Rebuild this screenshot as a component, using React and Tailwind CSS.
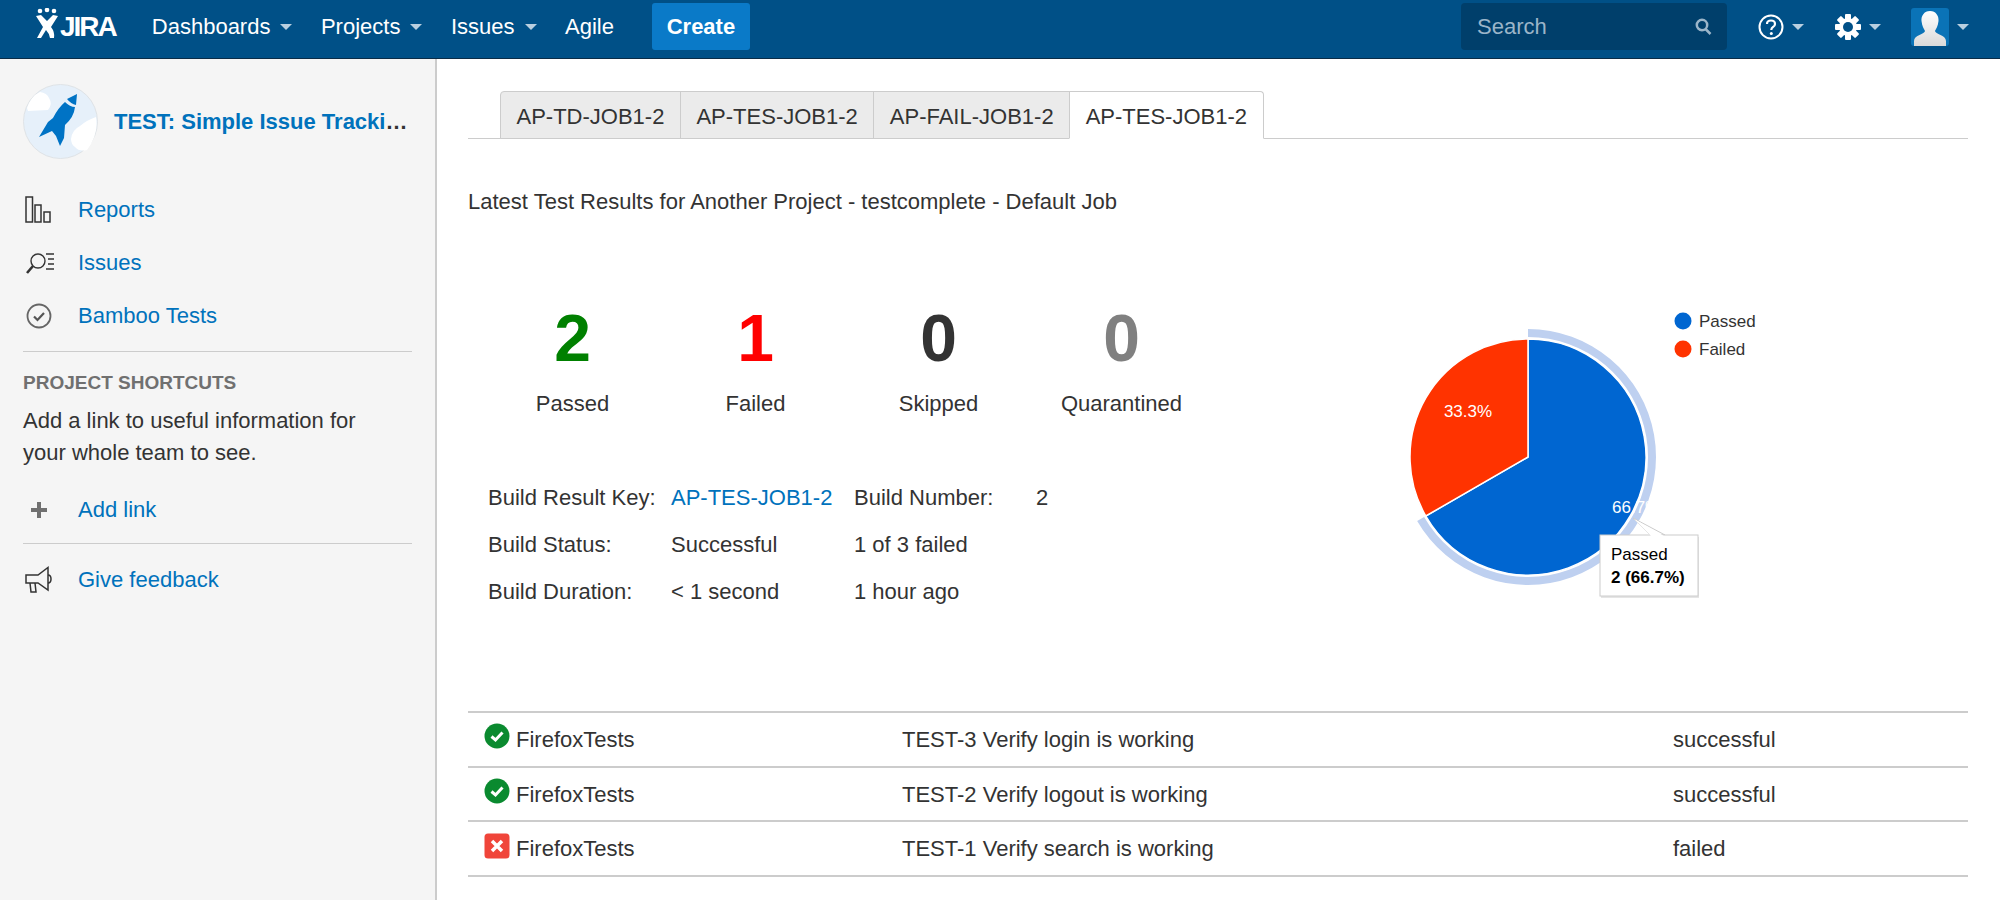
const Caret = ({ className = "" }) => (
  <span className={`inline-block w-0 h-0 border-l-[6px] border-r-[6px] border-t-[6px] border-l-transparent border-r-transparent border-t-[#b9cfe0] ${className}`} />
);

const NavItem = ({ label, caret = true }) => (
  <div className="flex items-center">
    <span className="text-[22px] text-white">{label}</span>
    {caret && <Caret className="ml-[10px]" />}
  </div>
);

const Logo = () => (
  <div className="flex items-end h-[30px] mb-[7px] shrink-0">
    <svg width="24" height="30" viewBox="0 0 24 30">
      <g fill="#fff">
        <circle cx="5" cy="3" r="2.300" />
        <circle cx="12" cy="2" r="2.300" />
        <circle cx="19" cy="3" r="2.300" />
        <path d="M1 8 L6 7 L12 13 L18 7 L23 8 L16 19 Q20 24 19 30 L15 30 Q14 25 11 22 L6 30 L2 30 L8 19 Z" />
      </g>
    </svg>
    <span className="text-[28px] leading-[28px] -mb-[3px] font-bold text-white ml-[1px] tracking-[-2px]">JIRA</span>
  </div>
);

const Avatar = () => (
  <svg width="75" height="75" viewBox="0 0 75 75" className="shrink-0">
    <circle cx="37.500" cy="37.500" r="37" fill="#e6f0fa" stroke="#dfe3e6" />
    <path d="M4 24 Q8 12 17 8 Q24 9 26 14 Q30 20 25 26 L5 27Z" fill="#fff" />
    <path d="M48 55 Q49 46 57 42 Q64 36 73 33 Q76 50 64 66 Q56 68 52 63 Q48 60 48 55Z" fill="#fff" />
    <path d="M54 10 L53 21 Q48 20 44 15 Z" fill="#0073c5" />
    <path d="M42 18 Q47 23 52 23 Q51 33 42 41 L41 54 L37 62 L33 52 L29 47 L16 53 L25 38 L30 34 Q35 24 42 18Z" fill="#0073c5" />
  </svg>
);

const ReportsIcon = () => (
  <svg width="28" height="28" viewBox="0 0 28 28" fill="none" stroke="#333" strokeWidth="1.500">
    <rect x="1" y="1" width="6.500" height="25" />
    <rect x="10" y="9" width="6" height="17" />
    <rect x="19" y="16" width="6" height="10" />
  </svg>
);
const IssuesIcon = () => (
  <svg width="30" height="22" viewBox="0 0 30 22" fill="none" stroke="#333" strokeWidth="1.400">
    <circle cx="13" cy="9" r="7" />
    <path d="M8 14 L2 21" strokeWidth="2.600" />
    <path d="M21 2 H29 M23 7 H29 M23 12 H29 M21 17 H29" />
  </svg>
);
const BambooIcon = () => (
  <svg width="26" height="26" viewBox="0 0 26 26" fill="none">
    <circle cx="13" cy="13" r="11.500" stroke="#666" strokeWidth="1.800" />
    <path d="M8 13.500 L11.500 17 L18 10" stroke="#555" strokeWidth="2.200" />
  </svg>
);
const PlusIcon = () => (
  <svg width="16" height="16" viewBox="0 0 16 16" fill="#707070">
    <rect x="6" y="0" width="4" height="16" />
    <rect x="0" y="6" width="16" height="4" />
  </svg>
);
const MegaphoneIcon = () => (
  <svg width="28" height="28" viewBox="0 0 28 28" fill="none" stroke="#333" strokeWidth="1.500">
    <path d="M1 9 H13 L23 1.500 V24 L13 17 H1Z" />
    <path d="M23 9 Q26 9 26 13 Q26 17 23 17" />
    <path d="M5 17 L6 26 H11 L10 17" />
  </svg>
);

const SideLink = ({ icon, children, inset = "pl-[2px]" }) => (
  <div className="flex items-center h-[53px]">
    <div className={`w-[55px] flex justify-start shrink-0 ${inset}`}>{icon}</div>
    <a className="text-[22px] text-[#0072bc]">{children}</a>
  </div>
);

const Sidebar = () => (
  <aside className="w-[437px] shrink-0 bg-[#f5f5f5] border-r-2 border-[#cccccc] pl-[23px] pr-[23px] pt-[25px] min-h-[841px]">
    <div className="flex items-center gap-[16px] h-[75px]">
      <Avatar />
      <div className="text-[22px] font-bold text-[#0072bc] whitespace-nowrap">TEST: Simple Issue Tracki<span className="text-[#333]">…</span></div>
    </div>
    <div className="mt-[24px]">
      <SideLink icon={<ReportsIcon />}>Reports</SideLink>
      <SideLink icon={<IssuesIcon />}>Issues</SideLink>
      <SideLink icon={<BambooIcon />} inset="pl-[3px]">Bamboo Tests</SideLink>
    </div>
    <div className="border-t-[1.500px] border-[#cccccc] mt-[9px] pt-[19px]">
      <div className="text-[19px] font-bold text-[#707070] leading-[24px]">PROJECT SHORTCUTS</div>
      <p className="text-[22px] text-[#333] leading-[32px] mt-[10px]">Add a link to useful information for<br />your whole team to see.</p>
      <div className="mt-[14px]"><SideLink icon={<PlusIcon />} inset="pl-[8px]">Add link</SideLink></div>
    </div>
    <div className="border-t-[1.500px] border-[#cccccc] mt-[7px] pt-[9px]">
      <SideLink icon={<MegaphoneIcon />}>Give feedback</SideLink>
    </div>
  </aside>
);

const Tab = ({ label, active, first }) => (
  <div className={`h-[48px] px-[15.500px] pt-[2px] flex items-center text-[22px] text-[#333] border border-[#cccccc] -mr-[1px] ${first ? "rounded-tl-[4px]" : ""} ${active ? "bg-white border-b-white rounded-tr-[4px]" : "bg-[#ebebeb]"}`}>
    {label}
  </div>
);

const Stat = ({ n, label, color }) => (
  <div className="w-[183px] flex flex-col items-center">
    <div className={`text-[66px] font-bold leading-[72px] -mt-[1px] ${color}`}>{n}</div>
    <div className="text-[22px] text-[#333] leading-[28px] mt-[16px]">{label}</div>
  </div>
);

const Details = () => {
  const rows = [
    ["Build Result Key:", <a className="text-[#0072bc]">AP-TES-JOB1-2</a>, "Build Number:", "2"],
    ["Build Status:", "Successful", "1 of 3 failed", ""],
    ["Build Duration:", "< 1 second", "1 hour ago", ""],
  ];
  return (
    <div className="ml-[20px] mt-[56px]">
      {rows.map((r, i) => (
        <div key={i} className="flex h-[47px] items-center text-[22px] text-[#333]">
          <div className="w-[183px]">{r[0]}</div>
          <div className="w-[183px]">{r[1]}</div>
          <div className="w-[182px]">{r[2]}</div>
          <div>{r[3]}</div>
        </div>
      ))}
    </div>
  );
};

const Pie = () => (
  <svg width="460" height="340" viewBox="0 0 460 340" className="shrink-0">
    <g transform="translate(153 154)">
      <path d="M0 -128 A128 128 0 1 1 -110.850 64 L-103.900 60 A120 120 0 1 0 0 -120Z" fill="#bed0f0" />
      <path d="M0 0 L0 -118 A118 118 0 1 1 -102.190 59Z" fill="#0066d1" stroke="#fff" strokeWidth="1.500" />
      <path d="M0 0 L-102.190 59 A118 118 0 0 1 0 -118Z" fill="#ff3300" stroke="#fff" strokeWidth="1.500" />
      <text x="-60" y="-40" fill="#fff" fontFamily="Liberation Sans" fontSize="17" textAnchor="middle">33.3%</text>
      <text x="84" y="56" fill="#fff" fontFamily="Liberation Sans" fontSize="17">66.7%</text>
      <g>
        <rect x="73" y="80" width="98" height="61" fill="#000" opacity="0.1" />
        <path d="M105 61 L122 78 H137 Z" fill="#fff" stroke="#ccc" />
        <rect x="72" y="78" width="98" height="61" fill="#fff" stroke="#ccc" />
        <path d="M106 62 L123 79 H136 Z" fill="#fff" />
        <text x="83" y="103" fill="#000" fontFamily="Liberation Sans" fontSize="17">Passed</text>
        <text x="83" y="126" fill="#000" fontFamily="Liberation Sans" fontSize="17" fontWeight="bold">2 (66.7%)</text>
      </g>
    </g>
    <circle cx="308" cy="18" r="8.500" fill="#0066d1" />
    <text x="324" y="24" fill="#333" fontFamily="Liberation Sans" fontSize="17">Passed</text>
    <circle cx="308" cy="46" r="8.500" fill="#ff3300" />
    <text x="324" y="52" fill="#333" fontFamily="Liberation Sans" fontSize="17">Failed</text>
  </svg>
);

const Ok = () => (
  <svg width="26" height="26" viewBox="0 0 26 26">
    <circle cx="13" cy="13" r="12.500" fill="#0a8a2f" />
    <path d="M7.500 13.500 L11.500 17 L18.500 9.500" fill="none" stroke="#fff" strokeWidth="3" />
  </svg>
);
const Bad = () => (
  <svg width="26" height="26" viewBox="0 0 26 26">
    <rect x="0.500" y="0.500" width="25" height="25" rx="3.500" fill="#f0453a" />
    <path d="M8 8 L18 18 M18 8 L8 18" stroke="#fff" strokeWidth="3.500" />
  </svg>
);

const Row = ({ icon, name, status }) => (
  <div className="flex items-center h-[54.700px] border-b-2 border-[#cccccc] text-[22px] text-[#333] pl-[16px]">
    <div className="w-[418px] flex items-center gap-[6px]">
      <span className="-mt-[6px] shrink-0">{icon}</span>
      <span>{name}</span>
    </div>
    <div className="w-[771px]">{status[0]}</div>
    <div>{status[1]}</div>
  </div>
);

const HelpIcon = () => (
  <svg width="26" height="26" viewBox="0 0 26 26" fill="none">
    <circle cx="13" cy="13" r="11.500" stroke="#fff" strokeWidth="2" />
    <path d="M9 10 Q9 6.500 13 6.500 Q17 6.500 17 10 Q17 12 15 13 Q13.300 14 13.300 16" stroke="#fff" strokeWidth="2.200" />
    <circle cx="13.300" cy="19.500" r="1.500" fill="#fff" />
  </svg>
);
const GearIcon = () => (
  <svg width="26" height="26" viewBox="0 0 26 26">
    <g fill="#fff">
      <rect x="10" y="0" width="6" height="26" rx="1" />
      <rect x="10" y="0" width="6" height="26" rx="1" transform="rotate(45 13 13)" />
      <rect x="10" y="0" width="6" height="26" rx="1" transform="rotate(90 13 13)" />
      <rect x="10" y="0" width="6" height="26" rx="1" transform="rotate(135 13 13)" />
      <circle cx="13" cy="13" r="9" />
    </g>
    <circle cx="13" cy="13" r="5" fill="#005087" />
  </svg>
);
const UserIcon = () => (
  <svg width="38" height="38" viewBox="0 0 38 38">
    <rect width="38" height="38" rx="3" fill="#0a73b7" />
    <defs>
      <linearGradient id="u" x1="0" y1="0" x2="0" y2="1">
        <stop offset="0" stopColor="#fff" />
        <stop offset="1" stopColor="#d9d9d9" />
      </linearGradient>
    </defs>
    <path d="M19 3 C25 3 28 8 27.500 13 C27 18 25 21 24 23 C24 26 35 27 35 33 V38 H3 V33 C3 27 14 26 14 23 C13 21 11 18 10.500 13 C10 8 13 3 19 3Z" fill="url(#u)" />
  </svg>
);

const Header = () => (
  <header className="h-[59px] bg-[#005087] border-b border-[#0a2c47] flex items-center pb-[5px] pl-[35px] pr-[31px]">
    <Logo />
    <nav className="flex items-center ml-[36px] gap-[28.500px]">
      <NavItem label="Dashboards" />
      <NavItem label="Projects" />
      <NavItem label="Issues" />
      <NavItem label="Agile" caret={false} />
    </nav>
    <button className="ml-[38px] h-[47px] w-[98px] rounded-[3px] bg-[#0a7ac8] text-white font-bold text-[22px]">Create</button>
    <div className="ml-auto flex items-center">
      <div className="w-[266px] h-[47px] rounded-[4px] bg-[#003f6b] flex items-center justify-between pl-[16px] pr-[15px]">
        <span className="text-[22px] text-[#9bb5c9]">Search</span>
        <svg width="17" height="17" viewBox="0 0 17 17" fill="none" stroke="#9bb5c9" strokeWidth="2.500">
          <circle cx="7" cy="7" r="5.200" />
          <path d="M10.500 11 L15.500 16" />
        </svg>
      </div>
      <div className="flex items-center ml-[31px]"><HelpIcon /><Caret className="ml-[8px]" /></div>
      <div className="flex items-center ml-[31px]"><GearIcon /><Caret className="ml-[8px]" /></div>
      <div className="flex items-center ml-[30px]"><UserIcon /><Caret className="ml-[8px]" /></div>
    </div>
  </header>
);

export default function App() {
  return (
    <div className="w-[2000px] h-[900px] overflow-hidden bg-white font-['Liberation_Sans',Arial,sans-serif]">
      <Header />
      <div className="flex">
        <Sidebar />
        <main className="w-[1563px] pl-[31px] pr-[32px] pt-[32px]">
          <div className="pl-[32px] flex border-b border-[#cccccc] h-[48px]">
            <Tab label="AP-TD-JOB1-2" first />
            <Tab label="AP-TES-JOB1-2" />
            <Tab label="AP-FAIL-JOB1-2" />
            <Tab label="AP-TES-JOB1-2" active />
          </div>
          <div className="text-[22px] text-[#333] mt-[49px] leading-[28px]">Latest Test Results for Another Project - testcomplete - Default Job</div>
          <div className="flex mt-[87px]">
            <div className="w-[907px]">
              <div className="flex ml-[13px]">
                <Stat n="2" label="Passed" color="text-[#008000]" />
                <Stat n="1" label="Failed" color="text-[#ff0000]" />
                <Stat n="0" label="Skipped" color="text-[#333333]" />
                <Stat n="0" label="Quarantined" color="text-[#808080]" />
              </div>
              <Details />
            </div>
            <Pie />
          </div>
          <div className="mt-[68px] border-t-2 border-[#cccccc]">
            <Row icon={<Ok />} name="FirefoxTests" status={["TEST-3 Verify login is working", "successful"]} />
            <Row icon={<Ok />} name="FirefoxTests" status={["TEST-2 Verify logout is working", "successful"]} />
            <Row icon={<Bad />} name="FirefoxTests" status={["TEST-1 Verify search is working", "failed"]} />
          </div>
        </main>
      </div>
    </div>
  );
}
